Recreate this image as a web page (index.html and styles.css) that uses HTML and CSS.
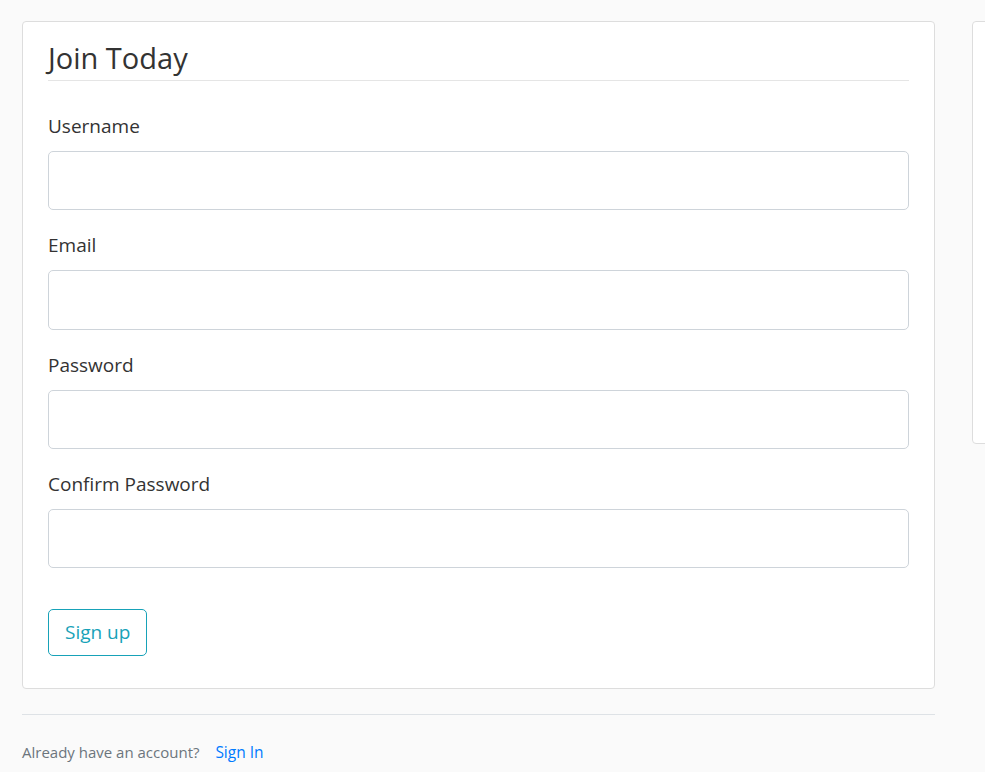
FILE: index.html
```html
<!DOCTYPE html>
<html lang="en">
<head>
<meta charset="utf-8">
<title>Join Today</title>
<link rel="stylesheet" href="styles.css">
</head>
<body>
<div class="page">
  <main class="main">
    <div class="content-section">
      <form class="form">
        <fieldset class="fieldset">
          <legend class="legend">Join Today</legend>
          <div class="form-group">
            <label class="label" for="username">Username</label>
            <input class="input" id="username" type="text">
          </div>
          <div class="form-group">
            <label class="label" for="email">Email</label>
            <input class="input" id="email" type="text">
          </div>
          <div class="form-group">
            <label class="label" for="password">Password</label>
            <input class="input" id="password" type="password">
          </div>
          <div class="form-group">
            <label class="label" for="confirm">Confirm Password</label>
            <input class="input" id="confirm" type="password">
          </div>
        </fieldset>
        <div class="form-group submit-group">
          <button class="btn" type="button">Sign up</button>
        </div>
      </form>
    </div>
    <div class="footer-note">
      <small class="muted">Already have an account? <a class="link" href="#">Sign In</a></small>
    </div>
  </main>
  <aside class="sidebar">
    <div class="side-card"></div>
  </aside>
</div>
</body>
</html>
```
FILE: styles.css
```css
html, body {
  margin: 0;
  padding: 0;
  overflow: hidden;
}
body {
  background: #fafafa;
  color: #333333;
  font-family: "Open Sans", "Noto Sans", sans-serif;
  font-size: 19px;
  line-height: 1.5;
}
.page {
  display: flex;
  gap: 37px;
  box-sizing: border-box;
  width: 985px;
  padding: 21px 0 0 22px;
  overflow: hidden;
}
.main {
  width: 913px;
  flex: none;
}
.content-section {
  background: #ffffff;
  border: 1px solid #dddddd;
  border-radius: 4px;
  padding: 13px 25px 12px 25px;
  margin-bottom: 25px;
}
.form { margin: 0; }
.fieldset {
  border: 0;
  margin: 0 0 21px 0;
  padding: 0;
  min-width: 0;
}
.legend {
  display: block;
  width: 100%;
  padding: 0;
  font-size: 29px;
  line-height: 45px;
  color: #333333;
  border-bottom: 1px solid rgba(0,0,0,.1);
  margin-bottom: 30px;
}
.form-group {
  margin-bottom: 20px;
}
.label {
  display: block;
  line-height: 30px;
  margin-bottom: 10px;
}
.input {
  display: block;
  box-sizing: border-box;
  width: 100%;
  height: 59.3px;
  border: 1px solid #ced4da;
  border-radius: 5px;
  background: #ffffff;
  font: inherit;
  padding: 10px 20px;
  margin: 0;
}
.btn {
  box-sizing: border-box;
  height: 47px;
  padding: 0 16px;
  border: 1px solid #17a2b8;
  border-radius: 5px;
  background: transparent;
  color: #17a2b8;
  font: inherit;
  font-size: 19px;
  line-height: 1.5;
  cursor: pointer;
}
.footer-note {
  border-top: 1px solid #dee2e6;
  padding-top: 22px;
}
.muted {
  color: #6c757d;
  font-size: 15px;
}
.link {
  color: #007bff;
  font-size: 15.5px;
  text-decoration: none;
  margin-left: 12px;
}
.sidebar {
  flex: 1;
  min-width: 0;
  overflow: hidden;
}
.side-card {
  width: 300px;
  height: 423px;
  box-sizing: border-box;
  background: #ffffff;
  border: 1px solid #dddddd;
  border-radius: 4px;
}
```
